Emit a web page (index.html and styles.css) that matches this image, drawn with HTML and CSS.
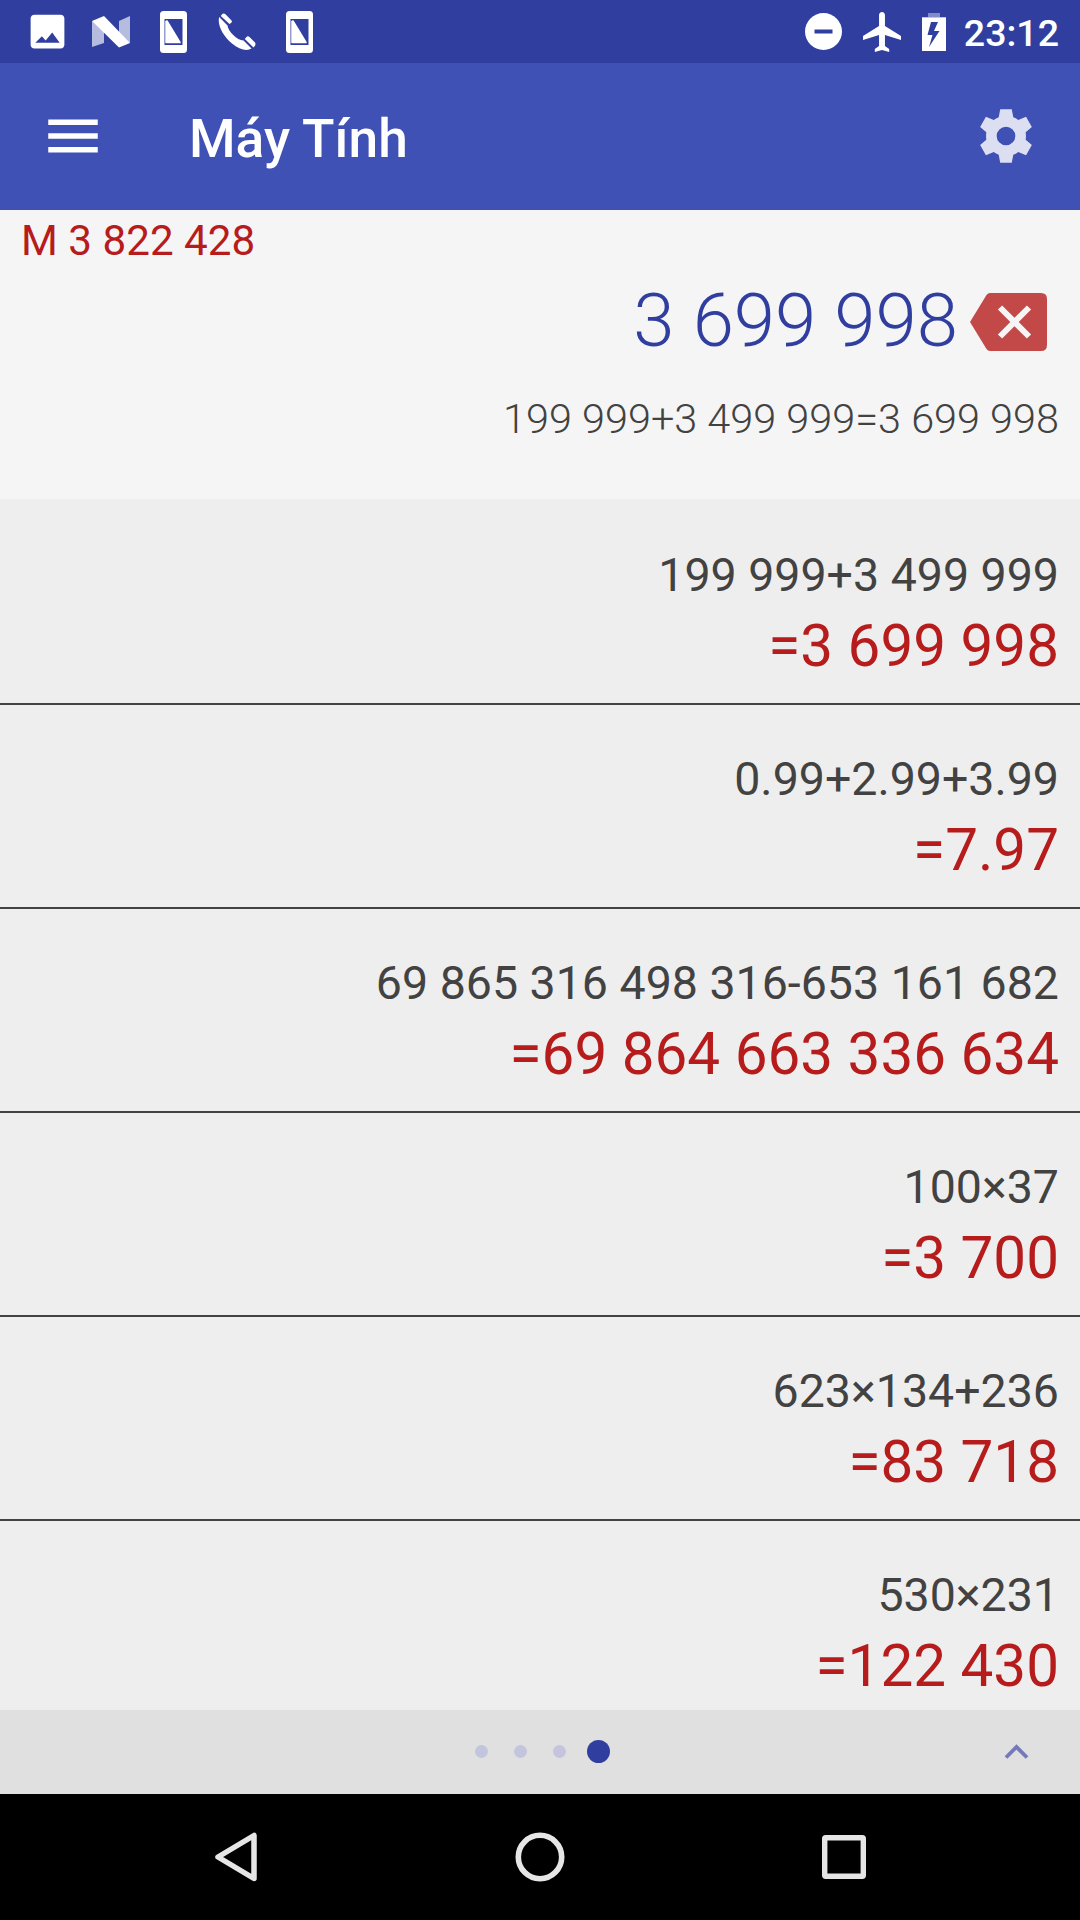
FILE: index.html
```html
<!DOCTYPE html>
<html lang="vi">
<head>
    <meta charset="UTF-8">
    <meta name="viewport" content="width=device-width, initial-scale=1.0">
    <title>Máy Tính</title>
    <link rel="stylesheet" href="styles.css">
</head>
<body>
    <div class="status-bar">
        <div class="notifications">
            <span class="slot">
                <svg width="45" height="45" viewBox="0 0 24 24" fill="#fff"><path d="M21 19V5c0-1.1-.9-2-2-2H5c-1.1 0-2 .9-2 2v14c0 1.1.9 2 2 2h14c1.1 0 2-.9 2-2zM9 14.500l2 2.300L14.500 12.500l4 5.500H5.500z"/></svg>
            </span>
            <span class="slot">
                <svg width="38" height="32" viewBox="0 0 38 32" fill="#fff"><path d="M0 5L12 12V27L0 31zM27 5L38 0V27L27 22z" opacity=".65"/><path d="M0 5L12 0L38 27L27 31.500z"/></svg>
            </span>
            <span class="slot">
                <svg width="27" height="42" viewBox="0 0 27 42"><rect width="27" height="42" rx="3.500" fill="#fff"/><rect x="4.500" y="8" width="18" height="26" fill="#303f9f"/><path d="M7 10L20 31.500H6V10.500z" fill="#fff" stroke="#fff" stroke-width="1.500" stroke-linejoin="round"/></svg>
            </span>
            <span class="slot">
                <svg width="38" height="38" viewBox="0 0 38 38" fill="#fff"><path d="M1.200 4L9.500 12.500C10 18 19 27.500 25.500 27.500L33.500 35.500C29 38.500 21 36.500 14 30.500C5 23 -1 12 1.200 4z"/><path d="M3.500 2Q5.500 -.5 7.500 1.300L13.500 7.500Q15 9 11.500 11L2.800 3zM28.500 24Q29.800 22.700 31.500 24L37 29.500Q38.500 31.500 35.500 34.500L26.800 26z"/></svg>
            </span>
            <span class="slot">
                <svg width="27" height="42" viewBox="0 0 27 42"><rect width="27" height="42" rx="3.500" fill="#fff"/><rect x="4.500" y="8" width="18" height="26" fill="#303f9f"/><path d="M7 10L20 31.500H6V10.500z" fill="#fff" stroke="#fff" stroke-width="1.500" stroke-linejoin="round"/></svg>
            </span>
        </div>
        <div class="system">
            <svg width="37" height="37" viewBox="0 0 37 37"><circle cx="18.500" cy="18.500" r="18.500" fill="#fff"/><path d="M9.500 18.500h18" stroke="#303f9f" stroke-width="4"/></svg>
            <svg width="38" height="40" viewBox="2.500 2 18 20" preserveAspectRatio="none" fill="#fff"><path d="M20.500 16v-2l-7.600-5V3.500c0-.83-.6-1.500-1.400-1.500S10.100 2.670 10.100 3.500V9l-7.600 5v2l7.600-2.500V19l-2 1.500V22l3.400-1 3.400 1v-1.500l-2-1.500v-5.500l7.600 2.500z"/></svg>
            <svg class="battery" width="24" height="38" viewBox="0 0 24 38"><path d="M6 0h12v4h6v1H0V4h6z" fill="#fff" opacity=".4"/><path d="M0 4.500h24V38H0zM9 9L5.500 22h5L7 34L17.500 18H12L16 9z" fill="#fff" fill-rule="evenodd"/></svg>
            <span class="time">23:12</span>
        </div>
    </div>

    <header class="toolbar">
        <svg width="66" height="66" viewBox="0 0 24 24" fill="#fff"><path d="M3 18h18v-2H3v2zm0-5h18v-2H3v2zm0-7v2h18V6H3z"/></svg>
        <h1>Máy Tính</h1>
        <svg class="settings" width="66" height="66" viewBox="0 0 24 24" fill="#fff"><path fill-rule="evenodd" d="M9.900 2.300h4.200l.55 2.900q1 .35 1.800 1L19.300 5l2.100 3.700-2.250 1.900q.2 1.400 0 2.800l2.250 1.900-2.100 3.700-2.850-1.200q-.8.650-1.800 1l-.55 2.900H9.900l-.55-2.900q-1-.35-1.800-1L4.700 19l-2.100-3.700 2.250-1.900q-.2-1.400 0-2.800L2.600 8.700 4.700 5l2.850 1.200q.8-.65 1.800-1zM12 8.600a3.400 3.400 0 1 0 0 6.800 3.400 3.400 0 0 0 0-6.800z"/></svg>
    </header>

    <section class="display">
        <div class="memory">M 3 822 428</div>
        <div class="current">
            <span class="value">3 699 998</span>
            <svg width="77" height="58" viewBox="0 0 77 58"><path d="M20 0H71Q77 0 77 6V52Q77 58 71 58H20Q18 58 16.500 56L0 29L16.500 2Q18 0 20 0z" fill="#c34848"/><path d="M30 14.500L59 43.500M59 14.500L30 43.500" stroke="#f5f5f5" stroke-width="6"/></svg>
        </div>
        <div class="equation">199 999+3 499 999=3 699 998</div>
    </section>

    <main class="history">
        <div class="item">
            <div class="expression">199 999+3 499 999</div>
            <div class="result">=3 699 998</div>
        </div>
        <div class="item">
            <div class="expression">0.99+2.99+3.99</div>
            <div class="result">=7.97</div>
        </div>
        <div class="item">
            <div class="expression">69 865 316 498 316-653 161 682</div>
            <div class="result">=69 864 663 336 634</div>
        </div>
        <div class="item">
            <div class="expression">100×37</div>
            <div class="result">=3 700</div>
        </div>
        <div class="item">
            <div class="expression">623×134+236</div>
            <div class="result">=83 718</div>
        </div>
        <div class="item">
            <div class="expression">530×231</div>
            <div class="result">=122 430</div>
        </div>
    </main>

    <div class="pager">
        <div class="dots">
            <span class="dot"></span>
            <span class="dot"></span>
            <span class="dot"></span>
            <span class="dot active"></span>
        </div>
        <svg width="25" height="17" viewBox="0 0 25 17"><path d="M2 14.500L12.500 4L23 14.500" fill="none" stroke="#7479bc" stroke-width="3.800"/></svg>
    </div>

    <nav class="nav-bar">
        <svg width="44" height="50" viewBox="0 0 44 50"><path d="M40 3.500V46.500L4 25z" fill="none" stroke="#e6e6e6" stroke-width="5.500" stroke-linejoin="round"/></svg>
        <svg width="50" height="50" viewBox="0 0 50 50"><circle cx="25" cy="25" r="21.700" fill="none" stroke="#e6e6e6" stroke-width="5.600"/></svg>
        <svg width="44" height="44" viewBox="0 0 44 44"><rect x="2.700" y="2.700" width="38.600" height="38.600" rx="1" fill="none" stroke="#e6e6e6" stroke-width="5.400"/></svg>
    </nav>
</body>
</html>
```
FILE: styles.css
```css
* {
    box-sizing: border-box;
}
body {
    font-family: Roboto, sans-serif;
    margin: 0;
    width: 1080px;
    height: 1920px;
    display: flex;
    flex-direction: column;
    overflow: hidden;
    background-color: #000;
    color: #424242;
}
svg {
    display: block;
    flex-shrink: 0;
}
.status-bar {
    height: 63px;
    flex-shrink: 0;
    display: flex;
    justify-content: space-between;
    padding: 0 21px 0 16px;
    background-color: #303f9f;
    color: #fff;
}
.notifications {
    display: flex;
    align-items: center;
}
.slot {
    width: 63px;
    display: flex;
    justify-content: center;
}
.system {
    display: flex;
    align-items: center;
    gap: 21px;
}
.battery {
    margin-right: -3px;
}
.time {
    font-size: 37.5px;
    font-weight: 500;
    line-height: 63px;
    padding-top: 3px;
}
.toolbar {
    height: 147px;
    flex-shrink: 0;
    display: flex;
    align-items: center;
    padding: 0 41px 2px 40px;
    background-color: #3f51b5;
    color: #fff;
}
.toolbar h1 {
    flex: 1;
    margin: 0 0 0 83px;
    padding-top: 6px;
    font-size: 53.3px;
    font-weight: 500;
    line-height: 60px;
}
.settings {
    opacity: 0.82;
}
.display {
    height: 289px;
    flex-shrink: 0;
    padding: 0 21px;
    background-color: #f5f5f5;
}
.memory {
    padding-top: 6px;
    font-size: 42.2px;
    line-height: 50px;
    color: #b71c1c;
}
.current {
    display: flex;
    justify-content: flex-end;
    align-items: center;
    gap: 12px;
    height: 90px;
    margin-top: 11px;
    padding-right: 12px;
}
.value {
    padding-bottom: 3px;
    font-size: 74.3px;
    font-weight: 300;
    line-height: 87px;
    color: #303f9f;
}
.equation {
    margin-top: 27px;
    font-size: 41.4px;
    font-weight: 300;
    line-height: 50px;
    text-align: right;
}
.history {
    height: 1211px;
    flex-shrink: 0;
    padding-top: 2px;
    overflow: hidden;
    background-color: #eee;
}
.item {
    height: 204px;
    padding: 46px 21px 0 0;
    text-align: right;
    border-bottom: 2px solid #424242;
}
.expression {
    font-size: 46.5px;
    line-height: 56px;
}
.result {
    margin-top: 8px;
    font-size: 58.4px;
    line-height: 70px;
    color: #b71c1c;
}
.pager {
    height: 84px;
    flex-shrink: 0;
    display: flex;
    align-items: center;
    justify-content: space-between;
    padding: 0 51px 2px 475px;
    background-color: #e0e0e0;
}
.dots {
    display: flex;
    align-items: center;
    gap: 26px;
}
.dot {
    width: 13px;
    height: 13px;
    border-radius: 50%;
    background-color: #c3c5de;
}
.dot.active {
    width: 23px;
    height: 23px;
    margin-left: -5px;
    background-color: #303f9f;
}
.nav-bar {
    flex: 1;
    display: flex;
    align-items: center;
    justify-content: space-between;
    padding: 0 214px;
}
```
